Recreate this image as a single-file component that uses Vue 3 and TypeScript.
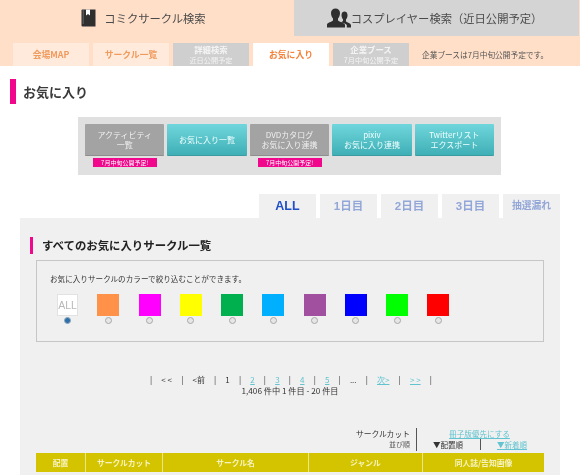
<script setup lang="ts">
const subNav = [
  { main: '会場MAP', kind: 'normal' },
  { main: 'サークル一覧', kind: 'normal' },
  { main: '詳細検索', sub: '近日公開予定', kind: 'off' },
  { main: 'お気に入り', kind: 'active' },
  { main: '企業ブース', sub: '7月中旬公開予定', kind: 'off' },
]
const actions = [
  { lines: ['アクティビティ', '一覧'], off: true, badge: true },
  { lines: ['お気に入り一覧'], off: false, badge: false },
  { lines: ['DVDカタログ', 'お気に入り連携'], off: true, badge: true },
  { lines: ['pixiv', 'お気に入り連携'], off: false, badge: false },
  { lines: ['Twitterリスト', 'エクスポート'], off: false, badge: false },
]
const dayTabs = ['ALL', '1日目', '2日目', '3日目', '抽選漏れ']
const colors = ['#ff9148', '#ff00ff', '#ffff00', '#00b04f', '#00b0ff', '#a0509f', '#0000ff', '#00ff00', '#ff0000']
const pages = [
  { t: '< <' }, { t: '<前' }, { t: '1' }, { t: '2', link: true }, { t: '3', link: true },
  { t: '4', link: true }, { t: '5', link: true }, { t: '...' }, { t: '次>', link: true }, { t: '> >', link: true },
]
const columns = [
  { t: '配置', w: 50 }, { t: 'サークルカット', w: 77 }, { t: 'サークル名', w: 146 },
  { t: 'ジャンル', w: 114 }, { t: '同人誌/告知画像', w: 121 },
]
</script>

<template>
  <div class="page">
    <header class="top">
      <div class="main-tabs">
        <div class="main-tab on">
          <svg class="icon" width="15" height="18" viewBox="0 0 15 18">
            <path d="M1.5 0.5H14.5V17.5H1.5Q0.5 17.5 0.5 16.5V1.5Q0.5 0.5 1.5 0.5Z" fill="#2f2f2f" />
            <path d="M5 0.5V6.5L7 5L9 6.5V0.5Z" fill="#fff" />
            <path d="M2.2 0.5V15" stroke="#8a8a8a" stroke-width="0.6" fill="none" />
          </svg>
          <span>コミクサークル検索</span>
        </div>
        <div class="main-tab off">
          <svg class="icon people" width="24" height="20" viewBox="0 0 24 20">
            <path d="M14 14.5C18 15.5 19 16 19.8 17V19.5H24V17C23.5 15 20.5 14.5 19 13.5V11.5C20.5 10 20.5 8 20.5 7C20.5 4.5 19 3.5 17.5 3.5C16 3.5 14.5 4.5 14.5 7C14.5 8 14.8 10 16 11.5V13Z" fill="#2f2f2f" />
            <path d="M0 19.5V16.5C0.5 14.5 4.5 14 6 12.5V10.5C4.5 9 4 6.5 4 5C4 2 6 0.5 8.5 0.5C11 0.5 13 2 13 5C13 6.5 12.5 9 11 10.5V12.5C12.5 14 16.5 14.5 18 16.5V19.5Z" fill="#2f2f2f" />
          </svg>
          <span>コスプレイヤー検索（近日公開予定）</span>
        </div>
      </div>
      <nav class="sub-nav">
        <div v-for="item in subNav" :key="item.main" class="sub-item" :class="item.kind">
          <span class="sub-main">{{ item.main }}</span>
          <span v-if="item.sub" class="sub-sub">{{ item.sub }}</span>
        </div>
        <p class="sub-note">企業ブースは7月中旬公開予定です。</p>
      </nav>
    </header>

    <h1 class="title">お気に入り</h1>

    <section class="actions">
      <div v-for="a in actions" :key="a.lines[0]" class="action">
        <div class="action-btn" :class="{ disabled: a.off }">
          <span v-for="l in a.lines" :key="l">{{ l }}</span>
        </div>
        <div v-if="a.badge" class="badge">7月中旬公開予定!</div>
      </div>
    </section>

    <div class="day-tabs">
      <div v-for="(d, i) in dayTabs" :key="d" class="day-tab" :class="{ current: i === 0, small: i === 4 }">{{ d }}</div>
    </div>

    <main class="panel">
      <h2 class="subtitle">すべてのお気に入りサークル一覧</h2>
      <div class="filter">
        <p class="filter-text">お気に入りサークルのカラーで絞り込むことができます。</p>
        <div class="swatches">
          <label class="swatch-col first">
            <span class="swatch all">ALL</span>
            <input type="radio" name="color" class="radio" checked />
          </label>
          <label v-for="c in colors" :key="c" class="swatch-col">
            <span class="swatch" :style="{ background: c }"></span>
            <input type="radio" name="color" class="radio" />
          </label>
        </div>
      </div>

      <div class="pager">
        <span class="sep">|</span>
        <template v-for="p in pages" :key="p.t">
          <span class="pg" :class="{ link: p.link }">{{ p.t }}</span>
          <span class="sep">|</span>
        </template>
      </div>
      <p class="count">1,406 件中 1 件目 - 20 件目</p>

      <div class="sort">
        <div class="sort-left">
          <span class="cut">サークルカット</span>
          <span class="order">並び順</span>
        </div>
        <div class="sort-right">
          <a class="prefer">冊子版優先にする</a>
          <div class="sort-row">
            <span class="by-place">▼配置順</span>
            <a class="by-new">▼新着順</a>
          </div>
        </div>
      </div>

      <div class="thead">
        <div v-for="c in columns" :key="c.t" class="th" :style="{ width: c.w + 'px' }">{{ c.t }}</div>
      </div>
    </main>
  </div>
</template>

<style>
html, body { margin: 0; background: #fff; overflow: hidden; }
</style>

<style scoped>
.page {
  width: 580px;
  height: 475px;
  overflow: hidden;
  font-family: "Noto Sans CJK JP", "Noto Sans", sans-serif;
  color: #333;
  filter: blur(0.3px);
}
.top { background: #ffdfc8; height: 66px; }
.main-tabs { display: flex; height: 36px; }
.main-tab {
  display: flex;
  align-items: center;
  justify-content: center;
  font-size: 11.3px;
  color: #4a4a4a;
}
.main-tab.on { width: 287px; gap: 8px; }
.main-tab.off { width: 285px; margin-left: 7px; padding-right: 4px; box-sizing: border-box; background: #d4d4d4; }
.sub-nav { display: flex; align-items: flex-end; height: 30px; padding-left: 13px; gap: 4px; box-sizing: border-box; }
.sub-item {
  width: 76px;
  height: 23px;
  display: flex;
  flex-direction: column;
  align-items: center;
  justify-content: center;
  font-size: 8.8px;
  line-height: 11px;
  font-weight: 700;
}
.sub-item.normal { background: #ffeadc; color: #f09a5c; }
.sub-item.off { background: #cfcfcf; color: #f4f4f4; font-size: 8.4px; line-height: 12.2px; }
.sub-item.active { background: #fff; color: #f5813a; }
.sub-sub { font-size: 7.2px; font-weight: 400; line-height: 10.5px; white-space: nowrap; }
.sub-main { white-space: nowrap; }
.sub-note {
  margin: 0 0 0 9px;
  height: 23px;
  line-height: 23px;
  font-size: 7.7px;
  color: #555;
  white-space: nowrap;
}
.title {
  margin: 13px 0 0 10px;
  height: 25px;
  border-left: 6px solid #f0078c;
  padding-left: 7px;
  font-size: 13px;
  line-height: 25px;
  font-weight: 700;
  color: #3a3a3a;
}
.actions {
  margin: 13px 0 0 78px;
  width: 423px;
  height: 58px;
  padding: 7px 7px 0;
  box-sizing: border-box;
  background: #e0e0e0;
  display: flex;
  gap: 3px;
}
.action { width: 80px; display: flex; flex-direction: column; align-items: center; }
.action-btn {
  width: 100%;
  height: 32px;
  display: flex;
  flex-direction: column;
  align-items: center;
  justify-content: center;
  font-size: 8px;
  line-height: 9.5px;
  color: #f3ffff;
  background: linear-gradient(#6fd6dc, #3fb0b6);
  border-bottom: 1px solid #3a9ca2;
  box-sizing: border-box;
  border-radius: 1px;
}
.action-btn.disabled { background: #a3a3a3; border-bottom-color: #8e8e8e; color: #f0f0f0; }
.badge {
  margin-top: 2px;
  width: 64px;
  height: 9px;
  background: #f0078c;
  color: #fff;
  font-size: 6px;
  line-height: 9px;
  text-align: center;
  white-space: nowrap;
}
.day-tabs {
  margin: 19px 0 0 259px;
  width: 301px;
  height: 24px;
  display: flex;
  gap: 4px;
}
.day-tab {
  width: 57px;
  height: 24px;
  background: #f0f0f0;
  color: #92a6d8;
  text-align: center;
  font-family: "Liberation Sans", "Noto Sans CJK JP", sans-serif;
  font-size: 11.5px;
  line-height: 24px;
  font-weight: 700;
}
.day-tab.current { color: #1f50c8; font-size: 12.5px; }
.day-tab.small { font-size: 9.8px; }
.panel {
  margin-left: 20px;
  width: 540px;
  height: 257px;
  background: #f0f0f0;
  padding-top: 19px;
  box-sizing: border-box;
}
.subtitle {
  margin: 0 0 0 10px;
  height: 17px;
  border-left: 3px solid #f0078c;
  padding-left: 9px;
  font-size: 11.4px;
  line-height: 17px;
  font-weight: 700;
  color: #222;
}
.filter {
  margin: 6px 0 0 16px;
  width: 508px;
  height: 82px;
  border: 1px solid #c6c6c6;
  box-sizing: border-box;
}
.filter-text {
  margin: 12px 0 0 13px;
  font-size: 7.6px;
  line-height: 12px;
  color: #333;
}
.swatches { display: flex; margin: 9px 0 0 20px; gap: 19.25px; }
.swatch-col { display: flex; flex-direction: column; align-items: center; width: 22px; }
.swatch-col.first { width: 21px; }
.swatch { display: block; width: 22px; height: 22px; }
.swatch-col.first .swatch { width: 21px; }
.swatch.all {
  background: #fff;
  box-sizing: border-box;
  border: 1px solid #e2e2e2;
  color: #b8b8b8;
  font-family: "Liberation Sans", sans-serif;
  font-size: 10.5px;
  line-height: 21px;
  text-align: center;
}
.radio {
  appearance: none;
  width: 7px;
  height: 7px;
  margin: 1px 0 0;
  border: 1px solid #a8a8a8;
  border-radius: 50%;
  background: #e6e6e6;
  box-sizing: border-box;
}
.radio:checked { background: #2f6fa8; border-color: #8ca8c0; }
.pager {
  margin-top: 31px;
  margin-left: 130px;
  width: 282px;
  display: flex;
  justify-content: space-between;
  align-items: center;
  height: 12px;
  font-size: 8px;
  color: #333;
}
.sep { font-size: 8px; color: #333; }
.pg.link { color: #62c4d0; text-decoration: underline; }
.count {
  margin: 0;
  text-align: center;
  font-size: 8.2px;
  line-height: 10px;
  color: #333;
}
.sort { display: flex; margin-top: 33px; height: 25px; }
.sort-left {
  width: 397px;
  height: 23px;
  box-sizing: border-box;
  padding-right: 6px;
  border-right: 1px solid #555;
  display: flex;
  flex-direction: column;
  align-items: flex-end;
  font-size: 7.8px;
  line-height: 11px;
}
.order { font-size: 7px; color: #555; }
.sort-right { width: 110px; display: flex; flex-direction: column; align-items: center; font-size: 7.6px; line-height: 11px; }
.prefer { color: #62c4d0; text-decoration: underline; margin-left: 15px; }
.sort-row { display: flex; width: 110px; padding-left: 16px; box-sizing: border-box; font-size: 7.5px; }
.by-place { width: 47px; border-right: 1px solid #555; }
.by-new { margin-left: 16px; color: #62c4d0; text-decoration: underline; }
.thead {
  margin-left: 16px;
  display: flex;
  width: 508px;
  height: 19px;
}
.th {
  background: #d4c400;
  color: #f6f3c0;
  border-right: 1px solid #ece58a;
  box-sizing: border-box;
  font-size: 7.8px;
  font-weight: 700;
  line-height: 19px;
  text-align: center;
}
.th:last-child { border-right: 0; }
</style>
